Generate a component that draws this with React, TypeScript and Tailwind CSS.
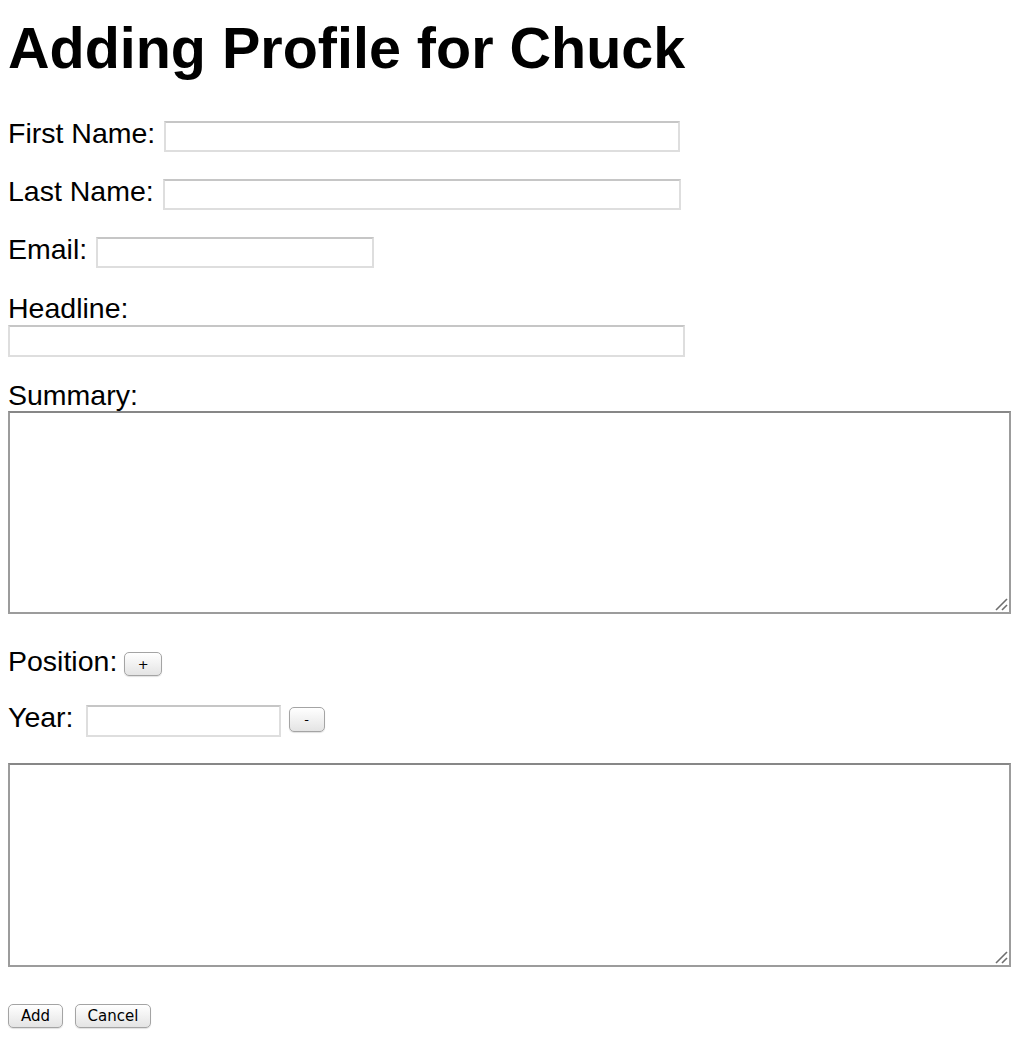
const inputCls =
  "block box-border border-2 border-[#dedede] border-t-[#c6c6c6] bg-white outline-none";
const areaCls =
  "block box-border resize-none border-2 border-[#9c9c9c] border-t-[#878787] bg-white outline-none";
const btnCls =
  "flex items-center justify-center rounded-[5px] border border-[#a4a4a4] bg-linear-to-b from-white to-[#e4e4e4] shadow-[0_1px_1px_rgba(0,0,0,0.12)] font-['DejaVu_Sans',sans-serif] text-black leading-none";

function Row({
  label,
  width,
  className,
}: {
  label: string;
  width: string;
  className: string;
}) {
  return (
    <div className={`flex h-8 items-start gap-[9px] ${className}`}>
      <span className="leading-[32px]">{label}</span>
      <input type="text" className={`${inputCls} mt-1 h-[31px] ${width}`} />
    </div>
  );
}

// textarea with the mac-style grip drawn in its corner
function Area({ className, height }: { className: string; height: string }) {
  return (
    <div className={`relative w-[1003px] ${className}`}>
      <textarea className={`${areaCls} ${height} w-full`} />
      <svg
        className="pointer-events-none absolute bottom-[3px] right-[3px]"
        width="14"
        height="14"
        viewBox="0 0 14 14"
      >
        <path d="M2 13 L13 2" stroke="#6e6e6e" strokeWidth="1.6" />
        <path d="M8 13 L13 8" stroke="#6e6e6e" strokeWidth="1.6" />
      </svg>
    </div>
  );
}

export default function App() {
  return (
    <div className="min-h-screen bg-white px-2 font-['Liberation_Sans',Arial,sans-serif] text-[28.5px] text-black">
      <h1 className="pt-4 text-[57.5px] font-bold leading-[64px]">
        Adding Profile for Chuck
      </h1>

      <Row label="First Name:" width="w-[516px]" className="mt-[37px]" />
      <Row label="Last Name:" width="w-[518px]" className="mt-[26px]" />
      <Row label="Email:" width="w-[278px]" className="mt-[26px]" />

      <div className="mt-[27px] leading-[32px]">Headline:</div>
      <input type="text" className={`${inputCls} mt-px h-8 w-[677px]`} />

      <div className="mt-[22px] leading-[32px]">Summary:</div>
      <Area className="" height="h-[203px]" />

      <div className="mt-[31px] flex h-8 items-start gap-[7px]">
        <span className="leading-[32px]">Position:</span>
        <button className={`${btnCls} mt-[7px] h-[24px] w-[38px] text-[13px]`}>
          +
        </button>
      </div>

      <div className="mt-[24px] flex h-[36px] items-start">
        <span className="leading-[32px]">Year:</span>
        <input type="text" className={`${inputCls} ml-[12px] mt-1 h-8 w-[195px]`} />
        <button className={`${btnCls} ml-[8px] mt-[6px] h-[25px] w-[36px] text-[13px]`}>
          -
        </button>
      </div>

      <Area className="mt-[26px]" height="h-[204px]" />

      <div className="mt-[37px] flex gap-[12px] pb-8">
        <button className={`${btnCls} h-[24px] w-[55px] text-[15px]`}>Add</button>
        <button className={`${btnCls} h-[24px] w-[76px] text-[15px]`}>Cancel</button>
      </div>
    </div>
  );
}
